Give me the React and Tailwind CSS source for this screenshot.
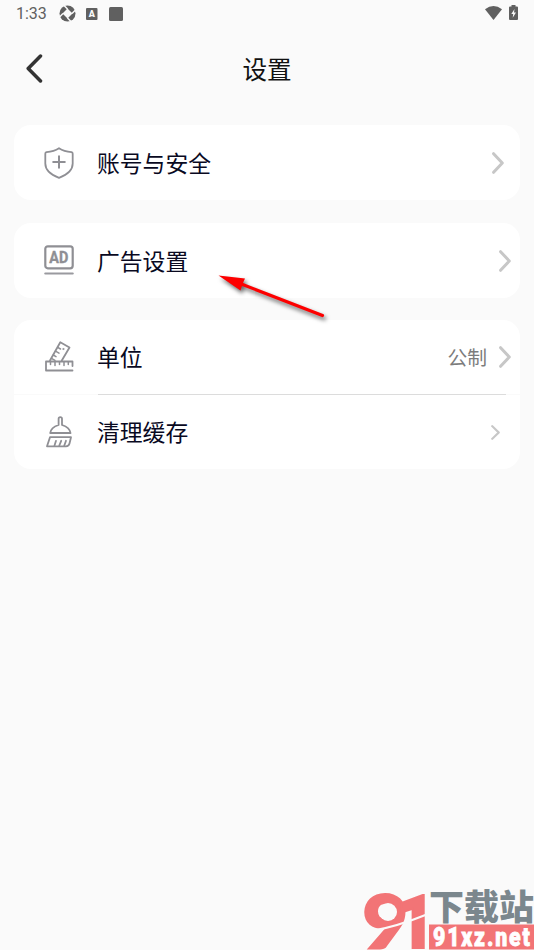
import React from 'react';

function ShieldIcon() {
  return (
    <svg width="30" height="32" viewBox="0 0 30 32" fill="none" stroke="#8f8f94" strokeWidth="1.8" strokeLinejoin="round" strokeLinecap="round">
      <path d="M15 1.2C11.5 3.5 6.5 4.8 2.5 5.2C1.7 5.4 1.3 6 1.3 6.8V16.5C1.3 23.5 7.5 28 15 30.8C22.5 28 28.7 23.5 28.7 16.5V6.8C28.7 6 28.3 5.4 27.5 5.2C23.5 4.8 18.5 3.5 15 1.2Z" />
      <path d="M15 9.2V20.8M9.2 15H20.8" strokeWidth="2" />
    </svg>
  );
}

function AdIcon() {
  return (
    <svg width="30" height="32" viewBox="0 0 30 32" fill="none">
      <rect x="1.3" y="1.3" width="27.4" height="22" rx="2.5" stroke="#8f8f94" strokeWidth="2.2" />
      <path d="M1.3 28.5H28.7" stroke="#9a9a9f" strokeWidth="2.2" strokeLinecap="round" />
      <text x="5.3" y="18" textLength="19" lengthAdjust="spacingAndGlyphs" fill="#8f8f94" stroke="#8f8f94" strokeWidth="0.4" className="font-['Roboto',sans-serif] text-[16px] font-bold">AD</text>
    </svg>
  );
}

function RulerIcon() {
  return (
    <svg width="30" height="32" viewBox="0 0 30 32" fill="none" stroke="#8f8f94" strokeWidth="1.8" strokeLinejoin="round" strokeLinecap="round">
      <path d="M28.5 20.5H2V29.5H28.5M28.5 20.5V25" />
      <path d="M6.5 21V23.5M11 21V24.5M15.5 21V23.5M20 21V24.5M24.3 21V23.5" strokeWidth="1.5" />
      <path d="M6 19.5L16.3 1.3L25.5 6.5L17.8 19.5" />
      <path d="M13.7 6.3L16.5 8M11.5 10.2L15 12.2M9.3 14L12 15.6M7.5 17.3L11 19.3" strokeWidth="1.5" />
      <circle cx="19.3" cy="8" r="0.6" fill="#8f8f94" strokeWidth="0.8" />
    </svg>
  );
}

function BroomIcon() {
  return (
    <svg width="30" height="32" viewBox="0 0 30 32" fill="none" stroke="#8f8f94" strokeWidth="1.8" strokeLinejoin="round" strokeLinecap="round">
      <path d="M14.6 9V2.8C14.6 0.6 18 0.6 18 2.8V9C22.5 10.5 26 12.8 26.5 17H6.2C6.7 12.8 10 10.5 14.6 9Z" />
      <path d="M6 21.2H27L25.5 27.5C25 29.5 24 30.3 22 30.3H3Z" />
      <path d="M12 24.8L10.5 29.5M17.2 24.8L15.3 29.5M22 24.8L20.3 29.5" />
    </svg>
  );
}

function Chevron({ small }) {
  return (
    <svg width={small ? 9 : 12} height={small ? 15 : 22} viewBox="0 0 12 22" preserveAspectRatio="none" fill="none" stroke="#c7c7c7" strokeWidth="3" strokeLinecap="round" strokeLinejoin="round">
      <path d="M1.6 1.7L10.3 11L1.6 20.3" />
    </svg>
  );
}

function Row({ icon, label, value, right, small }) {
  return (
    <div className={`flex h-[74px] items-center pl-[30px] ${right}`}>
      {icon}
      <span className="ml-[23px] flex-1 text-[22.8px] leading-8 text-[#09091f]">{label}</span>
      {value && <span className="mr-3 text-[19.8px] leading-7 text-[#7c7c7c]">{value}</span>}
      <Chevron small={small} />
    </div>
  );
}

function StatusBar() {
  return (
    <div className="flex h-7 items-center pl-4 pr-[15px] text-[#606060]">
      <span className="w-[43px] font-['Roboto',sans-serif] text-[16px] leading-5">1:33</span>
      <svg className="-mt-px" width="17" height="17" viewBox="0 0 17 17">
        <circle cx="8.5" cy="8.5" r="8" fill="currentColor" />
        <path d="M8.5 3.5L13.5 8.5L8.5 13.5L3.5 8.5Z" fill="#fafafa" />
        <path d="M8.5 4L4.5 0M13 8.5L17 4.5M8.5 13L12.5 17M4 8.5L0 12.5" stroke="#fafafa" strokeWidth="1.5" />
      </svg>
      <svg className="ml-[10px]" width="12" height="12" viewBox="0 0 12 12">
        <rect width="11.5" height="12" rx="1" fill="currentColor" />
        <text x="2.8" y="9.2" fill="#fafafa" className="font-['Roboto',sans-serif] text-[9px] font-black">A</text>
      </svg>
      <div className="ml-[11px] size-[14px] rounded-[1.5px] bg-[#606060]" />
      <svg className="-mt-[2px] ml-auto" width="17" height="14" viewBox="0 0 17 14" fill="currentColor">
        <path d="M0 3.2Q8.5 -3 17 3.2L8.5 14Z" />
      </svg>
      <svg className="-mt-[3px] ml-[7px] mr-px" width="9" height="15" viewBox="0 0 9 15">
        <path d="M2.5 0H6.5V1.5H8Q9 1.5 9 2.5V14Q9 15 8 15H1Q0 15 0 14V2.5Q0 1.5 1 1.5H2.5Z" fill="currentColor" />
        <path d="M5.5 4L2.3 9H4.2L3.7 12.7L7 7.5H5Z" fill="#fafafa" />
      </svg>
    </div>
  );
}

function SiteLogo() {
  return (
    <svg className="absolute bottom-0 right-0" width="180" height="70" viewBox="0 0 180 70">
      <g fill="#f27476" stroke="#f27476">
        <text transform="translate(9 67.5) scale(1.05 1)" strokeWidth="3" className="font-['Lato',sans-serif] text-[73px] font-black">9</text>
        <text transform="translate(42 68) scale(0.92 1)" strokeWidth="2" className="font-['Roboto',sans-serif] text-[74px] font-black">1</text>
      </g>
      <circle cx="34" cy="32" r="9" fill="#fafafa" />
      <path d="M17 51Q42 47 74 34" fill="none" stroke="#fafafa" strokeWidth="2" />
      <text x="75" y="39.5" textLength="105" lengthAdjust="spacingAndGlyphs" fill="#7b878d" className="font-['Noto_Sans_CJK_SC',sans-serif] text-[35px] font-black">下载站</text>
      <rect x="75" y="44.5" width="105" height="25" fill="#f27476" />
      <text transform="translate(79 65.5) scale(0.82 1)" textLength="118" fill="#fff" stroke="#fff" strokeWidth="0.8" className="font-['Roboto',sans-serif] text-[26px] font-black">91xz.net</text>
    </svg>
  );
}

export default function App() {
  return (
    <div className="relative h-[950px] w-[534px] overflow-hidden bg-[#fafafa] font-['Noto_Sans_CJK_SC',sans-serif]">
      <StatusBar />

      {/* Header */}
      <header className="grid h-[97px] grid-cols-[60px_1fr_60px] pt-[22px]">
        <svg className="ml-[26px] mt-[4px]" width="18" height="29" viewBox="0 0 18 29" fill="none" stroke="#333" strokeWidth="3.5" strokeLinecap="round" strokeLinejoin="round">
          <path d="M14.5 2L2.2 14.5L14.5 27" />
        </svg>
        <h1 className="text-center text-[24.6px] leading-[37px] text-[#111]">设置</h1>
      </header>

      {/* Setting groups */}
      <main className="flex flex-col gap-[22.5px] px-[14px]">
        <section className="rounded-[17px] bg-white pt-px">
          <Row icon={<ShieldIcon />} label="账号与安全" right="pr-4" />
        </section>
        <section className="rounded-[17px] bg-white pt-px">
          <Row icon={<AdIcon />} label="广告设置" right="pr-[9px]" />
        </section>
        <section className="rounded-[17px] bg-white">
          <Row icon={<RulerIcon />} label="单位" value="公制" right="pr-[9px]" />
          <div className="h-px bg-[#fafafa] pl-[84px] pr-[14px]">
            <div className="h-px bg-[#dcdcdc]" />
          </div>
          <Row icon={<BroomIcon />} label="清理缓存" right="pr-5" small />
        </section>
      </main>

      {/* Pointer arrow */}
      <svg className="absolute left-[200px] top-[260px] drop-shadow-[2px_3px_2px_rgba(0,0,0,0.6)]" width="140" height="70" viewBox="0 0 140 70">
        <path d="M40 23.5L122.5 55.5" stroke="#fd0000" strokeWidth="3.2" strokeLinecap="round" />
        <path d="M18.5 15.5L45 18.5L42.5 24L40.5 30.5Z" fill="#fd0000" />
      </svg>

      <SiteLogo />
    </div>
  );
}
